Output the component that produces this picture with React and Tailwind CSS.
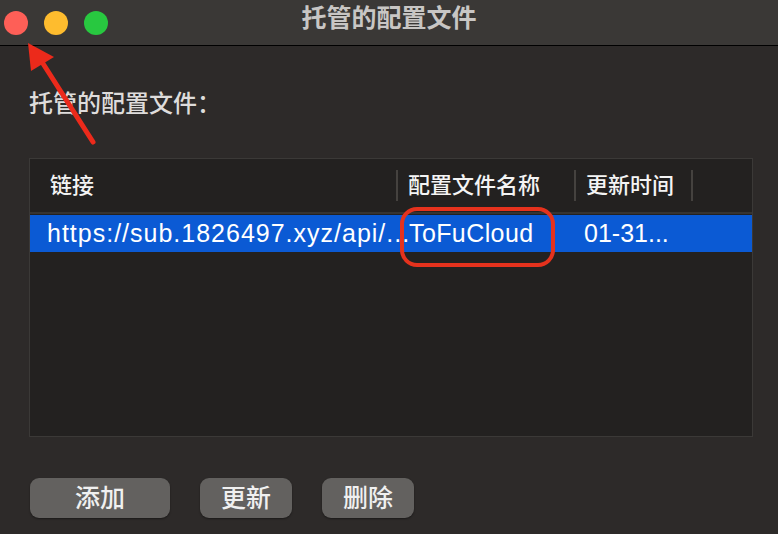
export default function App() {
  const font = { fontFamily: '"Liberation Sans", "Noto Sans CJK SC", sans-serif' };
  return (
    <div
      className="relative w-[778px] h-[534px] overflow-hidden bg-[#2d2a29] flex flex-col"
      style={font}
    >
      {/* Title bar */}
      <div className="h-[46px] shrink-0 bg-[#3a3836] border-b border-black grid grid-cols-[1fr_auto_1fr] items-center">
        <div className="flex items-center gap-[16px] pl-[4px]">
          <span className="w-[24px] h-[24px] rounded-full bg-[#fe5f57]" />
          <span className="w-[24px] h-[24px] rounded-full bg-[#febc2e]" />
          <span className="w-[24px] h-[24px] rounded-full bg-[#28c840]" />
        </div>
        <div className="text-[25px] font-bold text-[#c8c6c4] leading-none pb-[8px]">托管的配置文件</div>
        <div />
      </div>

      {/* Body */}
      <div className="flex flex-col px-[29px]">
        <div className="mt-[44px] text-[24px] leading-[28px] text-[#dedcdb] font-medium">托管的配置文件：</div>

        <div className="mt-[40px] w-[724px] h-[279px] border border-[#3b3937] bg-[#232120] flex flex-col">
          {/* header */}
          <div className="h-[55px] grid grid-cols-[368px_178px_117px_1fr] items-center border-b-2 border-[#363432] text-[22px] text-[#f4f4f4] font-medium">
            <div className="flex items-center justify-between pl-[20px]">
              <span>链接</span>
              <span className="w-[2px] h-[31px] bg-[#45423f]" />
            </div>
            <div className="flex items-center justify-between pl-[10px]">
              <span>配置文件名称</span>
              <span className="w-[2px] h-[31px] bg-[#45423f]" />
            </div>
            <div className="flex items-center justify-between pl-[10px]">
              <span>更新时间</span>
              <span className="w-[2px] h-[31px] bg-[#45423f]" />
            </div>
            <div />
          </div>
          {/* row */}
          <div className="h-[37px] mt-[1px] bg-[#0b5ad4] grid grid-cols-[368px_178px_117px_1fr] items-center text-[25px] text-white leading-none">
            <div className="pl-[17px] whitespace-nowrap tracking-[1px]">https://sub.1826497.xyz/api/...</div>
            <div className="pl-[11px] whitespace-nowrap tracking-[0.4px]">ToFuCloud</div>
            <div className="pl-[8px] whitespace-nowrap">01-31...</div>
            <div />
          </div>
        </div>

        {/* buttons */}
        <div className="mt-[41px] flex items-center gap-[30px] pl-[1px]">
          <button className="w-[140px] h-[40px] rounded-[9px] bg-[#63615f] text-[25px] font-medium text-[#f0f0f0] leading-none shadow-[0_1px_2px_rgba(0,0,0,0.4)]">添加</button>
          <button className="w-[92px] h-[40px] rounded-[9px] bg-[#63615f] text-[25px] font-medium text-[#f0f0f0] leading-none shadow-[0_1px_2px_rgba(0,0,0,0.4)]">更新</button>
          <button className="w-[92px] h-[40px] rounded-[9px] bg-[#63615f] text-[25px] font-medium text-[#f0f0f0] leading-none shadow-[0_1px_2px_rgba(0,0,0,0.4)]">删除</button>
        </div>
      </div>

      {/* Red annotations overlay */}
      <div className="absolute left-[400px] top-[207px] w-[155px] h-[60px] rounded-[17px] border-[4px] border-[#e5321d]" />
      <svg className="absolute left-0 top-0 pointer-events-none" width="778" height="534">
        <line x1="93" y1="142" x2="42" y2="62" stroke="#ec2a1b" strokeWidth="5" strokeLinecap="round" />
        <polygon points="28,43 31,71 54,57" fill="#ec2a1b" />
      </svg>
    </div>
  );
}
